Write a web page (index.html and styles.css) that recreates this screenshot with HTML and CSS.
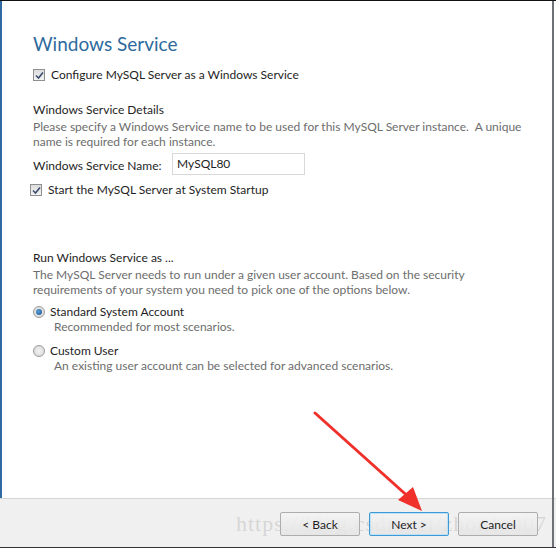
FILE: index.html
```html
<!DOCTYPE html>
<html>
<head>
<meta charset="utf-8">
<link rel="stylesheet" href="styles.css">
</head>
<body>
<div class="window">
  <div class="content">
    <h1 class="title">Windows Service</h1>
    <label class="check first">
      <span class="box"><svg width="9" height="9" viewBox="0 0 9 9"><path d="M1 4.5 L3.5 7 L8 1.5" fill="none" stroke="#3c4d6b" stroke-width="1.6"/></svg></span>
      <span>Configure MySQL Server as a Windows Service</span>
    </label>

    <div class="section details">
      <div class="heading">Windows Service Details</div>
      <p class="desc">Please specify a Windows Service name to be used for this MySQL Server instance.&nbsp; A unique name is required for each instance.</p>
      <div class="field">
        <span class="field-label">Windows Service Name:</span>
        <span class="input">MySQL80</span>
      </div>
      <label class="check startup">
        <span class="box"><svg width="9" height="9" viewBox="0 0 9 9"><path d="M1 4.5 L3.5 7 L8 1.5" fill="none" stroke="#3c4d6b" stroke-width="1.6"/></svg></span>
        <span>Start the MySQL Server at System Startup</span>
      </label>
    </div>

    <div class="section runas">
      <div class="heading">Run Windows Service as ...</div>
      <p class="desc">The MySQL Server needs to run under a given user account. Based on the security requirements of your system you need to pick one of the options below.</p>
      <div class="option">
        <div class="radio-row"><span class="radio checked"></span><span class="opt-title">Standard System Account</span></div>
        <div class="opt-desc">Recommended for most scenarios.</div>
      </div>
      <div class="option">
        <div class="radio-row"><span class="radio"></span><span class="opt-title">Custom User</span></div>
        <div class="opt-desc">An existing user account can be selected for advanced scenarios.</div>
      </div>
    </div>
  </div>
  <div class="footer">
    <span class="watermark">https://blog.csdn.net/zhou1s007</span>
    <button class="btn">&lt; Back</button>
    <button class="btn primary">Next &gt;</button>
    <button class="btn">Cancel</button>
  </div>
  <svg class="arrow" width="556" height="550" viewBox="0 0 556 550">
    <path d="M315 413 L412 500" stroke="#f0302a" stroke-width="3" stroke-linecap="round" fill="none"/>
    <path d="M422 511 L398 500 L413 487 Z" fill="#f0302a"/>
  </svg>
</div>
</body>
</html>
```
FILE: styles.css
```css
* { box-sizing: border-box; }
html, body { margin: 0; padding: 0; background: #fff; }
body {
  font-family: "Lato", "Noto Sans", sans-serif;
  font-size: 12px;
  color: #1e1e1e;
  width: 556px;
  height: 550px;
  overflow: hidden;
}
.window {
  position: relative;
  width: 556px;
  height: 550px;
  border-top: 1px solid #111;
  display: flex;
  flex-direction: column;
  background: #fff;
}
.window::before {
  content: "";
  position: absolute;
  left: 0; top: 0; bottom: 3px;
  width: 2px;
  background: #2f6aa3;
}
.window::after {
  content: "";
  position: absolute;
  right: 2px; top: 0; bottom: 3px;
  width: 2px;
  background: #6e7178;
}
.content {
  flex: 1;
  padding: 32px 0 0 33px;
}
.title {
  margin: 0;
  font-weight: normal;
  font-size: 19px;
  line-height: 22px;
  color: #2e6a9d;
}
.check {
  display: flex;
  align-items: center;
  gap: 6px;
  line-height: 14px;
}
.check.first { margin-top: 13px; }
.box {
  width: 12px; height: 12px;
  border: 1px solid #8e8f8f;
  background: linear-gradient(#dcdcdc, #f4f4f4);
  display: flex; align-items: center; justify-content: center;
}
.section .heading { line-height: 15px; }
.details { margin-top: 20px; }
.desc {
  margin: 2px 0 0 0;
  color: #6d6d6d;
  line-height: 15px;
  width: 500px;
}
.field {
  display: flex;
  align-items: center;
  margin-top: 4px;
}
.field-label { width: 139px; padding-top: 2px; }
.input {
  width: 133px; height: 22px;
  border: 1px solid #d9d9d9;
  padding: 1px 0 0 4px;
  line-height: 18px;
}
.check.startup { margin-top: 8px; margin-left: -3px; }
.runas { margin-top: 53px; }
.runas .desc { margin-top: 2px; }
.option { margin-top: 7px; }
.option + .option { margin-top: 9px; }
.radio-row { display: flex; align-items: center; gap: 5px; line-height: 15px; }
.radio {
  width: 12px; height: 12px;
  border-radius: 50%;
  border: 1px solid #9a9a9a;
  background: radial-gradient(circle, #f2f2f2, #d6d6d6);
  position: relative;
}
.radio.checked::after {
  content: "";
  position: absolute;
  left: 2px; top: 2px;
  width: 6px; height: 6px;
  border-radius: 50%;
  background: radial-gradient(circle at 40% 40%, #5aa0d8, #1b4e8a);
}
.opt-desc { padding-left: 21px; color: #6d6d6d; line-height: 15px; }
.footer {
  position: relative;
  height: 50px;
  margin-bottom: 2px;
  border-top: 1px solid #d5d5d5;
  border-bottom: 1px solid #333;
  background: #f0f0f0;
  display: flex;
  justify-content: flex-end;
  align-items: center;
  gap: 9px;
  padding: 2px 18px 0 0;
}
.btn {
  position: relative;
  width: 80px; height: 24px;
  font-family: inherit;
  font-size: 12px;
  color: #1e1e1e;
  border: 1px solid #adadad;
  border-radius: 2px;
  background: linear-gradient(rgba(244,244,244,0.85), rgba(228,228,228,0.85));
  padding: 0;
}
.btn.primary { border-color: #3c9ad6; box-shadow: inset 0 0 0 1px #bfe0f5; }
.watermark {
  position: absolute;
  left: 236px; top: 12px;
  font-family: "Liberation Serif", serif;
  font-size: 22px;
  color: rgba(150,150,150,0.3);
  letter-spacing: 1px;
  pointer-events: none;
  white-space: nowrap;
}
.arrow { position: absolute; left: 0; top: -1px; pointer-events: none; }
```
